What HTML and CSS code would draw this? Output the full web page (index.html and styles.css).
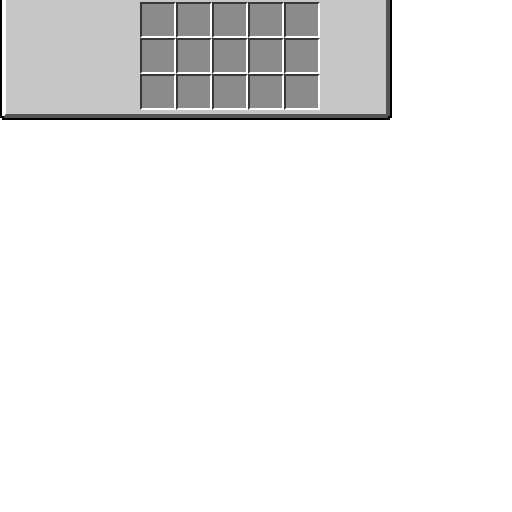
FILE: index.html
```html
<!DOCTYPE html>
<html>
<head>
    <title>Inventory</title>
    <link rel="stylesheet" href="styles.css">
</head>
<body>
    <div class="panel">
        <div class="panel-inner">
            <div class="slots">
                <div class="slot"></div>
                <div class="slot"></div>
                <div class="slot"></div>
                <div class="slot"></div>
                <div class="slot"></div>
                <div class="slot"></div>
                <div class="slot"></div>
                <div class="slot"></div>
                <div class="slot"></div>
                <div class="slot"></div>
                <div class="slot"></div>
                <div class="slot"></div>
                <div class="slot"></div>
                <div class="slot"></div>
                <div class="slot"></div>
            </div>
        </div>
    </div>
</body>
</html>
```

FILE: styles.css
```css
body {
    margin: 0;
    background: #fff;
    font-family: "Liberation Sans", Arial, sans-serif;
}

.panel {
    position: relative;
    width: 388px;
    margin-top: -40px;
    border: 2px solid #000;
}

/* stepped pixel corners */
.panel::before,
.panel::after {
    content: "";
    position: absolute;
    bottom: -2px;
    width: 2px;
    height: 2px;
    background: #fff;
}

.panel::before {
    left: -2px;
    box-shadow: 2px -2px 0 #000;
}

.panel::after {
    right: -2px;
    box-shadow: -2px -2px 0 #000;
}

.panel-inner {
    background: #c6c6c6;
    border-top: 4px solid #fff;
    border-left: 4px solid #fff;
    border-right: 4px solid #555;
    border-bottom: 4px solid #555;
    padding: 36px 0 4px 134px;
}

.slots {
    display: grid;
    grid-template-columns: repeat(5, 36px);
    grid-auto-rows: 36px;
}

.slot {
    box-sizing: border-box;
    background: #8b8b8b;
    border-top: 2px solid #373737;
    border-left: 2px solid #373737;
    border-right: 2px solid #fff;
    border-bottom: 2px solid #fff;
}
```
